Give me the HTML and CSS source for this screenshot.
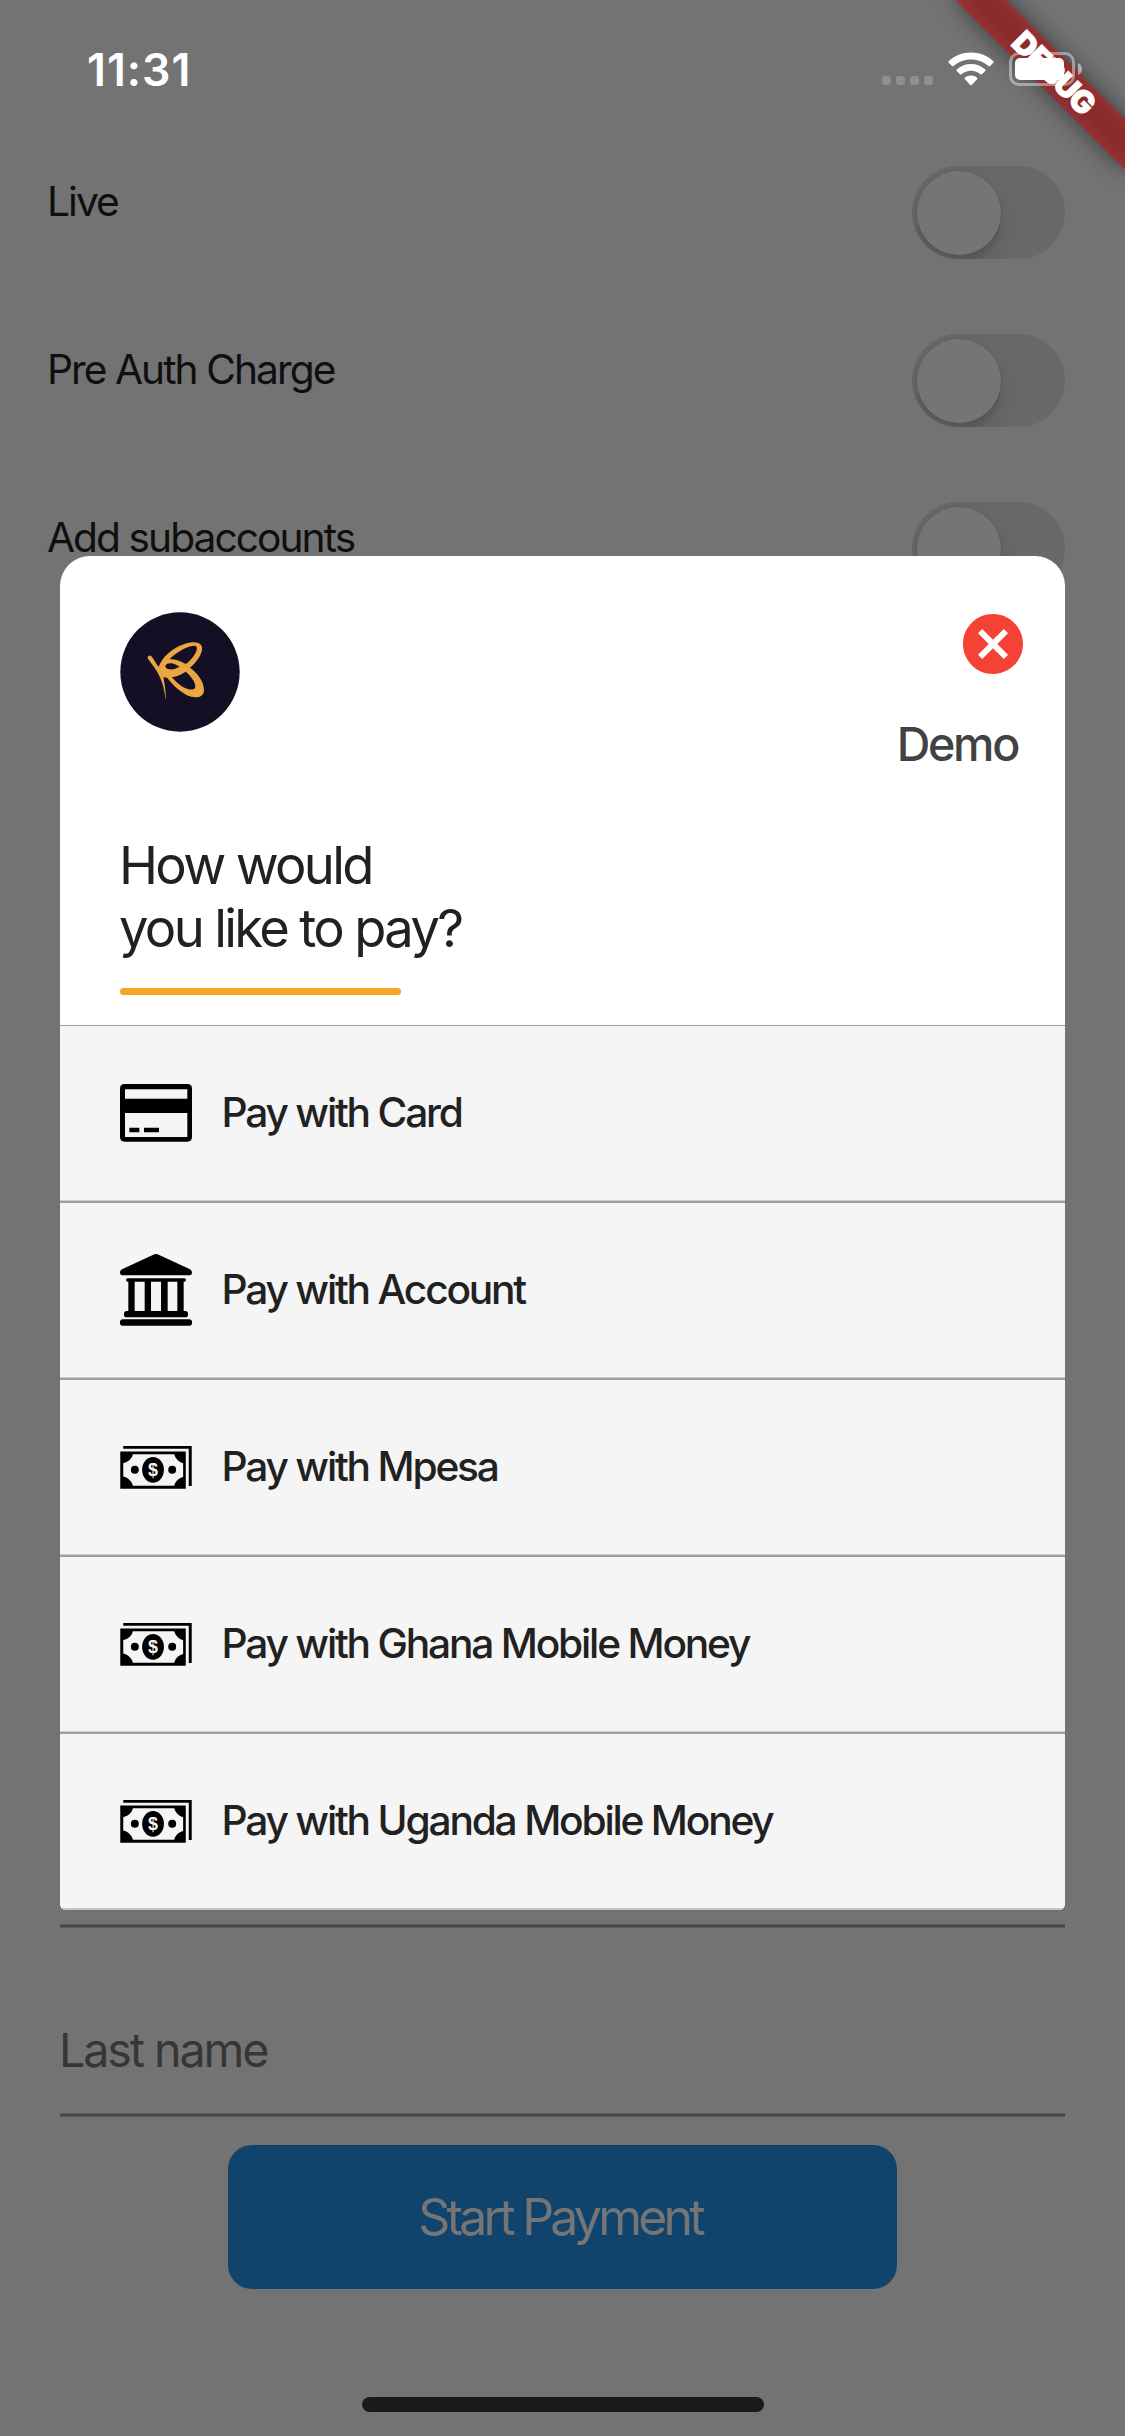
FILE: index.html
```html
<!DOCTYPE html>
<html lang="en">
<head>
<meta charset="utf-8">
<title>Payment</title>
<link rel="stylesheet" href="styles.css">
</head>
<body>
<svg class="defs" width="0" height="0" aria-hidden="true">
  <symbol id="cash" viewBox="0 0 216 130">
    <path d="M9 0H216V121H207V8H9Z"/>
    <path fill-rule="evenodd" d="M0 17H198V129H0ZM38 25C35 39 24 48 9 52V92C24 96 35 106 38 120H163C167 106 177 98 190 94V52C177 48 167 39 163 25Z"/>
    <ellipse cx="99" cy="72" rx="33" ry="39"/>
    <circle cx="44" cy="72" r="12"/>
    <circle cx="157" cy="72" r="12"/>
    <text class="dollar" x="99" y="91" text-anchor="middle">$</text>
  </symbol>
</svg>
<div class="screen">
  <svg class="banner" width="220" height="220" viewBox="0 0 220 220">
    <filter id="soft" x="-30%" y="-150%" width="160%" height="400%"><feGaussianBlur stdDeviation="11.9"/></filter>
    <g transform="translate(220 0) rotate(45)">
      <rect x="-120" y="84" width="240" height="36" fill="#000" fill-opacity=".5" filter="url(#soft)"/>
      <rect x="-120" y="84" width="240" height="36" fill="#b71c1c" fill-opacity=".627"/>
      <text class="banner-text" x="1" y="113" text-anchor="middle">DEBUG</text>
    </g>
  </svg>

  <header class="status">
    <span class="time">11:31</span>
    <div class="indicators">
      <div class="dots"><i></i><i></i><i></i><i></i></div>
      <svg class="wifi" width="46" height="34" viewBox="0 0 46 34">
        <path d="M23 .5C31.800 .5 39.500 3.800 45.300 9.300Q46 10 45.300 10.800L42 14.100Q41.300 14.700 40.600 14.100C35.800 9.700 29.700 7.400 23 7.400S10.200 9.700 5.400 14.100Q4.700 14.700 4 14.100L.7 10.800Q0 10 .7 9.300C6.500 3.800 14.200 .5 23 .5Z"/>
        <path d="M23 12C28.600 12 33.500 14 37.300 17.500Q38 18.200 37.300 18.900L34 22.200Q33.300 22.900 32.500 22.200C29.900 20 26.700 18.700 23 18.700S16.100 20 13.500 22.200Q12.700 22.900 12 22.200L8.700 18.900Q8 18.200 8.700 17.500C12.500 14 17.400 12 23 12Z"/>
        <path d="M23 23.500C25.400 23.500 27.500 24.400 29.100 25.800Q29.800 26.500 29.100 27.200L23.700 32.900Q23 33.600 22.300 32.900L16.900 27.200Q16.200 26.500 16.900 25.800C18.500 24.400 20.600 23.500 23 23.500Z"/>
      </svg>
      <svg class="battery" width="73" height="34" viewBox="0 0 73 34">
        <rect x="1.500" y="1.500" width="63" height="31" rx="8.500" fill="none" stroke="#fff" stroke-opacity=".42" stroke-width="3"/>
        <rect x="6" y="6" width="49" height="22" rx="5"/>
        <path d="M69 11Q73 13 73 17T69 23Z" fill-opacity=".5"/>
      </svg>
    </div>
  </header>

  <main class="form">
    <div class="option"><label>Live</label><span class="switch"><b></b></span></div>
    <div class="option"><label>Pre Auth Charge</label><span class="switch"><b></b></span></div>
    <div class="option"><label>Add subaccounts</label><span class="switch"><b></b></span></div>
    <div class="field first"></div>
    <div class="field"><span class="placeholder">Last name</span></div>
    <button class="start"><span>Start Payment</span></button>
    <div class="home"></div>
  </main>

  <section class="sheet">
    <div class="head">
      <div class="head-top">
        <svg class="logo" width="120" height="120" viewBox="240 215 360 360">
          <circle cx="420" cy="395" r="179" fill="#150f26"/>
          <path fill="#eaa640" fill-rule="evenodd" d="M357 378C372 338 424 306 462 306C482 306 490 318 485 334C479 352 466 368 450 382C474 400 492 424 492 450C492 466 480 471 466 471C434 469 404 440 381 412L370 411C374 432 378 452 377 481C374 455 370 432 357 405C347 385 334 370 323 354C322 346 329 343 334 348C341 357 348 368 354 378ZM389 356C405 340 436 318 463 316C474 317 471 328 467 337C460 350 449 363 438 371C424 363 406 357 389 356ZM376 377C378 369 388 368 396 369C404 371 413 376 419 379C410 384 399 388 389 387C381 386 376 382 376 377ZM396 411C411 408 426 402 437 394C452 406 466 424 466 439C465 448 455 449 446 447C427 443 410 427 396 411Z"/>
        </svg>
        <div class="side">
          <svg class="close" width="72" height="72" viewBox="0 0 24 24"><path fill="#f44336" d="M12 2C6.470 2 2 6.470 2 12s4.470 10 10 10 10-4.470 10-10S17.530 2 12 2zm5 13.590L15.590 17 12 13.410 8.410 17 7 15.590 10.590 12 7 8.410 8.410 7 12 10.590 15.590 7 17 8.410 13.410 12 17 15.590z"/></svg>
          <span class="demo">Demo</span>
        </div>
      </div>
      <h1>How would<br>you like to pay?</h1>
      <div class="accent"></div>
    </div>
    <ul class="methods">
      <li>
        <svg width="72" height="58" viewBox="0 0 216 174">
          <path fill-rule="evenodd" d="M14 0H202Q216 0 216 14V159Q216 173 202 173H14Q0 173 0 159V14Q0 0 14 0ZM15 16V44H202V16ZM15 87V159H202V87Z"/>
          <path d="M28 131H58V145H28ZM72 131H117V145H72Z"/>
        </svg>
        <span>Pay with Card</span>
      </li>
      <li>
        <svg width="72" height="72" viewBox="0 0 216 216">
          <path d="M100 2Q108 -2 116 2L210 46Q216 50 216 56Q215 64 207 64H9Q1 64 0 56Q0 49 6 46Z"/>
          <rect x="18" y="73" width="180" height="10" rx="5"/>
          <path d="M25 80H44V174H25ZM74 80H93V174H74ZM123 80H143V174H123ZM172 80H191V174H172Z"/>
          <rect x="12" y="171" width="192" height="19" rx="8"/>
          <rect x="0" y="196" width="216" height="19" rx="8"/>
        </svg>
        <span>Pay with Account</span>
      </li>
      <li><svg width="72" height="43"><use href="#cash"/></svg><span>Pay with Mpesa</span></li>
      <li><svg width="72" height="43"><use href="#cash"/></svg><span>Pay with Ghana Mobile Money</span></li>
      <li><svg width="72" height="43"><use href="#cash"/></svg><span>Pay with Uganda Mobile Money</span></li>
    </ul>
  </section>
</div>
</body>
</html>
```
FILE: styles.css
```css
* { box-sizing: border-box; margin: 0; padding: 0; }

body {
  width: 1125px;
  height: 2436px;
  overflow: hidden;
  background: #737373;
  font-family: Inter, "Liberation Sans", sans-serif;
  color: #212121;
}

.defs { position: absolute; }

.screen {
  position: relative;
  width: 1125px;
  height: 2436px;
  display: flex;
  flex-direction: column;
  overflow: hidden;
}

.banner { position: absolute; top: 0; right: 0; }
.banner-text { font-size: 31px; font-weight: 900; letter-spacing: -1.2px; fill: #fff; stroke: #fff; stroke-width: .8px; }

.status {
  position: relative;
  height: 166px;
  padding: 40px 43px 0 87px;
  display: flex;
  justify-content: space-between;
  align-items: flex-start;
  color: #fff;
}
.time { font-size: 44.7px; line-height: 60px; font-weight: 600; letter-spacing: 1px; }
.indicators { display: flex; align-items: flex-start; padding-top: 12px; fill: #fff; }
.dots { display: flex; gap: 5px; margin: 24px 15px 0 0; }
.dots i { width: 9px; height: 9px; border-radius: 3px; background: #8f8f8f; }
.battery { margin-left: 15px; }

.form { flex: 1; display: flex; flex-direction: column; align-items: stretch; }
.option {
  height: 168px;
  padding: 0 60px 0 47px;
  display: flex;
  justify-content: space-between;
  align-items: flex-start;
}
.option label { margin-top: 6px; font-size: 40.7px; line-height: 60px; letter-spacing: -1.95px; color: #0f0f0f; }
.switch {
  width: 153px;
  height: 93px;
  padding: 4.5px;
  border-radius: 47px;
  background: #696969;
  overflow: hidden;
}
.switch b {
  display: block;
  width: 84px;
  height: 84px;
  border-radius: 50%;
  background: #757575;
  box-shadow: 0 0 0 1px rgba(0,0,0,.04), 0 9px 24px rgba(0,0,0,.15), 0 9px 3px rgba(0,0,0,.06);
}
.field {
  height: 189px;
  margin: 0 60px;
  padding-top: 93px;
  border-bottom: 2px solid #474747;
  box-shadow: 0 1px #5c5c5c, inset 0 -1px #5c5c5c;
}
.field.first { height: 1257px; }
.placeholder { margin-left: -1px; font-size: 46.6px; line-height: 60px; letter-spacing: -2.1px; color: #363636; }
.start {
  width: 669px;
  height: 144px;
  margin: 29px auto 0 228px;
  padding-right: 5px;
  border: 0;
  border-radius: 24px;
  background: #10446d;
  font: 400 50px/60px Inter, "Liberation Sans", sans-serif;
  letter-spacing: -3.8px;
  color: #757575;
}
.home { width: 402px; height: 15px; margin: 108px auto 0 362px; border-radius: 8px; background: #1a1a1a; }

.sheet {
  position: absolute;
  left: 60px;
  top: 556px;
  width: 1005px;
  height: 1354px;
  border-radius: 30px 30px 6px 6px;
  background: #fff;
  overflow: hidden;
}
.head { height: 470px; padding: 56px 48px 0 60px; border-bottom: 1px solid #9e9e9e; }
.head-top { display: flex; justify-content: space-between; height: 222px; }
.side { display: flex; flex-direction: column; align-items: flex-end; margin-top: -4px; }
.close { margin-right: -12px; }
.demo { margin: 34px -1px 0 0; font-size: 46.6px; line-height: 60px; font-weight: 500; letter-spacing: -2.3px; color: #424242; }
h1 { margin-left: -1px; font-size: 52.5px; line-height: 63px; font-weight: 400; letter-spacing: -2.65px; }
.accent { width: 281px; height: 7px; margin-top: 28px; border-radius: 4px; background: #f5a623; }

.methods { list-style: none; background: #f5f5f5; border-bottom: 2px solid #c4c4c4; }
.methods li {
  height: 177px;
  padding: 0 0 1px 60px;
  display: flex;
  align-items: center;
  gap: 29.5px;
  border-bottom: 2px solid #9e9e9e;
  box-shadow: inset 0 -1px #cecece;
  font-size: 40.7px;
  font-weight: 500;
  letter-spacing: -2.2px;
}
.methods li span { margin-top: -1px; }
.methods li:last-child { height: 174px; padding-bottom: 0; border-bottom: 0; box-shadow: none; }
.dollar { font: 700 54px "Liberation Sans", sans-serif; letter-spacing: 0; fill: #f5f5f5; }
```
